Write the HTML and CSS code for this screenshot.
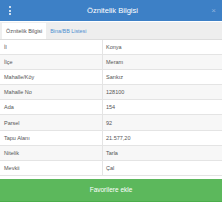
FILE: index.html
```html
<!DOCTYPE html>
<html>
<head>
<meta charset="utf-8">
<link rel="stylesheet" href="styles.css">
</head>
<body>
<div class="panel">
  <header class="header">
    <span class="kebab"><i></i><i></i><i></i></span>
    <h1 class="title">Öznitelik Bilgisi</h1>
    <span class="close">×</span>
  </header>
  <div class="body">
    <nav class="tabs">
      <span class="tab active">Öznitelik Bilgisi</span>
      <span class="tab">Bina/BB Listesi</span>
    </nav>
    <div class="table">
      <div class="row"><span class="k">İl</span><span class="v">Konya</span></div>
      <div class="row"><span class="k">İlçe</span><span class="v">Meram</span></div>
      <div class="row"><span class="k">Mahalle/Köy</span><span class="v">Sarıkız</span></div>
      <div class="row"><span class="k">Mahalle No</span><span class="v">128100</span></div>
      <div class="row"><span class="k">Ada</span><span class="v">154</span></div>
      <div class="row"><span class="k">Parsel</span><span class="v">92</span></div>
      <div class="row"><span class="k">Tapu Alanı</span><span class="v">21.577,20</span></div>
      <div class="row"><span class="k">Nitelik</span><span class="v">Tarla</span></div>
      <div class="row"><span class="k">Mevkii</span><span class="v">Çal</span></div>
    </div>
  </div>
  <button class="fav">Favorilere ekle</button>
</div>
</body>
</html>
```
FILE: styles.css
```css
* { box-sizing: border-box; }
html, body { margin: 0; padding: 0; }
body { font-family: "Liberation Sans", Arial, sans-serif; background: #fff; }
.panel { width: 222px; height: 202px; display: flex; flex-direction: column; overflow: hidden; }
.header { height: 21px; flex: none; background: #3d80c6; display: flex; align-items: center; justify-content: space-between; padding: 0 6px 0 9px; border-bottom: 1px solid #fff; box-sizing: content-box; }
.kebab { display: flex; flex-direction: column; gap: 1.5px; width: 8px; }
.kebab i { display: block; width: 2px; height: 2px; background: #fff; border-radius: 1px; }
.title { margin: 0; font-weight: normal; font-size: 7.6px; color: #fff; }
.close { color: #8fb3dd; font-size: 8px; width: 8px; text-align: right; }
.body { flex: 1; overflow-y: scroll; background: #fff; }
.body::-webkit-scrollbar { width: 4px; }
.body::-webkit-scrollbar-track { background: #f4f4f4; }
.body::-webkit-scrollbar-thumb { background: #c4c4c4; }
.tabs { height: 17.5px; background: #eeeeee; display: flex; align-items: stretch; padding: 1px 0 0 2px; border-bottom: 1px solid #ddd; }
.tab { font-size: 5.4px; color: #4d8fd0; display: flex; align-items: center; padding: 0 4px; }
.tab.active { background: #fff; color: #555; }
.table { display: flex; flex-direction: column; padding-bottom: 8px; }
.row { height: 15.2px; flex: none; display: grid; grid-template-columns: 103px 1fr; border-bottom: 1px solid #e4e4e4; font-size: 5.5px; color: #555; }
.row:nth-child(even) { background: #f7f7f7; }
.k { padding-left: 4px; display: flex; align-items: center; border-right: 1px solid #e4e4e4; }
.v { padding-left: 3px; display: flex; align-items: center; }
.fav { height: 23px; flex: none; margin-top: 2px; border: 0; background: #5cb85c; color: #fff; font-family: "Liberation Sans", Arial, sans-serif; font-size: 6.5px; width: 100%; padding: 0 0 2px; border-bottom: 1.5px solid #4cae4c; }
```
